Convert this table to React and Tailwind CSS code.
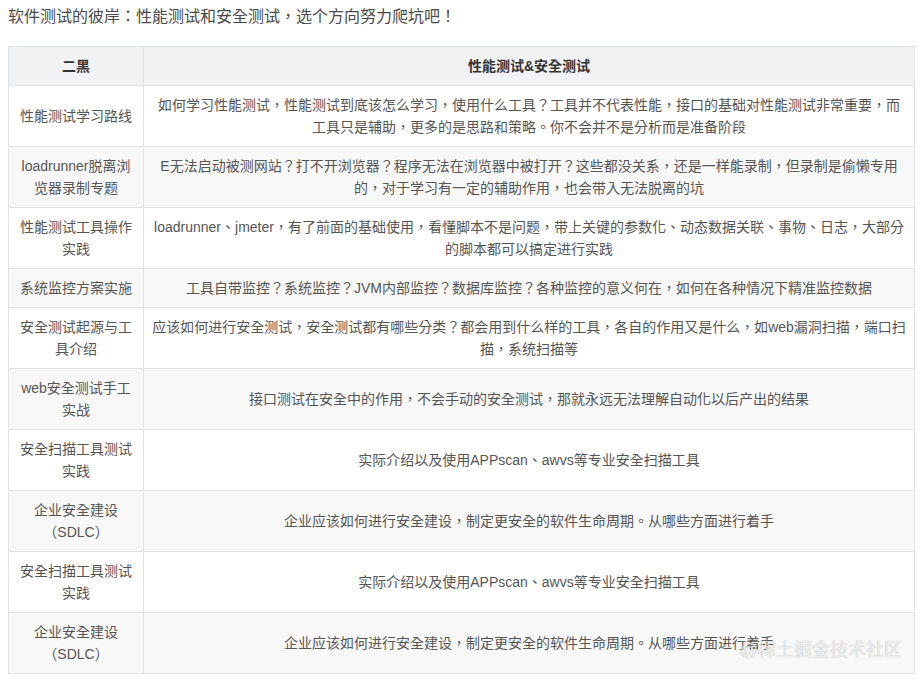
import React from "react";

const rows = [
  {
    topic: "性能测试学习路线",
    desc: "如何学习性能测试，性能测试到底该怎么学习，使用什么工具？工具并不代表性能，接口的基础对性能测试非常重要，而工具只是辅助，更多的是思路和策略。你不会并不是分析而是准备阶段",
  },
  {
    topic: "loadrunner脱离浏览器录制专题",
    desc: "E无法启动被测网站？打不开浏览器？程序无法在浏览器中被打开？这些都没关系，还是一样能录制，但录制是偷懒专用的，对于学习有一定的辅助作用，也会带入无法脱离的坑",
  },
  {
    topic: "性能测试工具操作实践",
    desc: "loadrunner、jmeter，有了前面的基础使用，看懂脚本不是问题，带上关键的参数化、动态数据关联、事物、日志，大部分的脚本都可以搞定进行实践",
  },
  {
    topic: "系统监控方案实施",
    desc: "工具自带监控？系统监控？JVM内部监控？数据库监控？各种监控的意义何在，如何在各种情况下精准监控数据",
  },
  {
    topic: "安全测试起源与工具介绍",
    desc: "应该如何进行安全测试，安全测试都有哪些分类？都会用到什么样的工具，各自的作用又是什么，如web漏洞扫描，端口扫描，系统扫描等",
  },
  {
    topic: "web安全测试手工实战",
    desc: "接口测试在安全中的作用，不会手动的安全测试，那就永远无法理解自动化以后产出的结果",
  },
  {
    topic: "安全扫描工具测试实践",
    desc: "实际介绍以及使用APPscan、awvs等专业安全扫描工具",
  },
  {
    topic: "企业安全建设（SDLC）",
    desc: "企业应该如何进行安全建设，制定更安全的软件生命周期。从哪些方面进行着手",
  },
  {
    topic: "安全扫描工具测试实践",
    desc: "实际介绍以及使用APPscan、awvs等专业安全扫描工具",
  },
  {
    topic: "企业安全建设（SDLC）",
    desc: "企业应该如何进行安全建设，制定更安全的软件生命周期。从哪些方面进行着手",
  },
];

export default function App() {
  return (
    <div className="w-[922px] h-[681px] overflow-hidden bg-white px-2 pt-[4px] font-['Liberation_Sans','Noto_Sans_CJK_TC','Noto_Sans_CJK_SC',sans-serif] [text-spacing-trim:space-all]">
      <p className="text-[16px] leading-[26px] text-[#4a4a4a]">
        软件测试的彼岸：性能测试和安全测试，选个方向努力爬坑吧！
      </p>

      <div className="relative mt-[16px] w-[906px]">
        <table className="w-[906px] table-fixed border-collapse text-[14px] leading-[22px]">
          <colgroup>
            <col className="w-[135px]" />
            <col className="w-[771px]" />
          </colgroup>
          <thead>
            <tr className="bg-[#f0f2f3]">
              <th className="border border-[#dfe2e5] px-[10px] py-2 text-center font-bold text-[#333]">
                二黑
              </th>
              <th className="border border-[#dfe2e5] px-[7.5px] py-2 text-center font-bold text-[#333]">
                性能测试&amp;安全测试
              </th>
            </tr>
          </thead>
          <tbody>
            {rows.map((r, i) => (
              <tr key={i} className="bg-white even:bg-[#f8f8f8]">
                <td className="border border-[#dfe2e5] px-[10px] py-2 text-center text-[#555]">
                  {r.topic}
                </td>
                <td className="border border-[#dfe2e5] px-[7.5px] py-2 text-center text-[#555]">
                  {r.desc}
                </td>
              </tr>
            ))}
          </tbody>
        </table>

        {/* watermark sits over the last row */}
        <span className="absolute bottom-[12px] right-[12px] text-[18px] leading-[24px] text-[rgba(255,255,255,0.8)] [text-shadow:0_0_1px_rgba(0,0,0,0.35)]">
          @稀土掘金技术社区
        </span>
      </div>
    </div>
  );
}
